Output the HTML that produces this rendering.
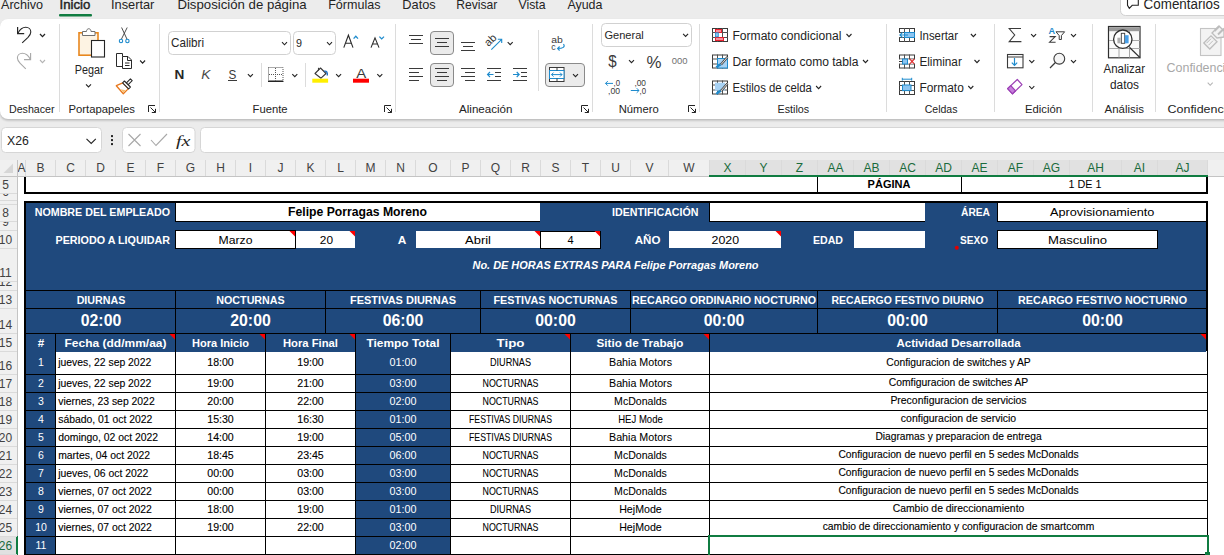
<!DOCTYPE html>
<html><head><meta charset="utf-8"><title>Excel</title>
<style>
html,body{margin:0;padding:0;width:1224px;height:555px;overflow:hidden;background:#ececec;}
svg{display:block;font-family:"Liberation Sans",sans-serif;}
</style></head><body>
<svg width="1224" height="555" viewBox="0 0 1224 555" shape-rendering="auto">
<rect x="0" y="0" width="1224" height="555" fill="#ececec" />
<text x="1" y="8.6" font-size="13.3" fill="#242424" textLength="42" lengthAdjust="spacingAndGlyphs" >Archivo</text>
<text x="59.6" y="8.6" font-size="13.3" fill="#242424" textLength="30.8" lengthAdjust="spacingAndGlyphs" stroke="#242424" stroke-width="0.45">Inicio</text>
<text x="111" y="8.6" font-size="13.3" fill="#242424" textLength="43.4" lengthAdjust="spacingAndGlyphs" >Insertar</text>
<text x="177.4" y="8.6" font-size="13.3" fill="#242424" textLength="129.2" lengthAdjust="spacingAndGlyphs" >Disposición de página</text>
<text x="328.2" y="8.6" font-size="13.3" fill="#242424" textLength="52.3" lengthAdjust="spacingAndGlyphs" >Fórmulas</text>
<text x="402.3" y="8.6" font-size="13.3" fill="#242424" textLength="33.4" lengthAdjust="spacingAndGlyphs" >Datos</text>
<text x="456.3" y="8.6" font-size="13.3" fill="#242424" textLength="41" lengthAdjust="spacingAndGlyphs" >Revisar</text>
<text x="518.5" y="8.6" font-size="13.3" fill="#242424" textLength="27" lengthAdjust="spacingAndGlyphs" >Vista</text>
<text x="567.4" y="8.6" font-size="13.3" fill="#242424" textLength="35" lengthAdjust="spacingAndGlyphs" >Ayuda</text>
<rect x="59" y="14" width="33" height="2.5" fill="#107C41" rx="1"/>
<rect x="1120.5" y="-6" width="120" height="21.5" rx="5" fill="#ffffff" stroke="#d1d1d1" stroke-width="1"/>
<path d="M1127.5,-1 V5.3 L1129.3,8.4 L1132.2,5.3 H1138.3 V-1" stroke="#242424" stroke-width="1.1" fill="none" />
<text x="1143.6" y="8.8" font-size="14" fill="#242424" textLength="76" lengthAdjust="spacingAndGlyphs" >Comentarios</text>
<defs><filter id="sh" x="-5%" y="-10%" width="110%" height="130%"><feGaussianBlur stdDeviation="1.3"/></filter></defs>
<rect x="0" y="20.5" width="1240" height="100" rx="8" fill="#000" opacity="0.22" filter="url(#sh)"/>
<rect x="0" y="19" width="1240" height="100" rx="8" fill="#ffffff"/>
<rect x="59" y="24" width="1" height="88" fill="#dcdcdc" />
<rect x="159" y="24" width="1" height="88" fill="#dcdcdc" />
<rect x="395" y="24" width="1" height="88" fill="#dcdcdc" />
<rect x="592" y="24" width="1" height="88" fill="#dcdcdc" />
<rect x="699" y="24" width="1" height="88" fill="#dcdcdc" />
<rect x="886" y="24" width="1" height="88" fill="#dcdcdc" />
<rect x="994" y="24" width="1" height="88" fill="#dcdcdc" />
<rect x="1092" y="24" width="1" height="88" fill="#dcdcdc" />
<rect x="1155" y="24" width="1" height="88" fill="#dcdcdc" />
<rect x="538" y="30" width="1" height="61" fill="#dcdcdc" />
<rect x="261" y="63" width="1" height="24" fill="#dcdcdc" />
<rect x="305" y="63" width="1" height="24" fill="#dcdcdc" />
<text x="9" y="113" font-size="11.3" fill="#242424" textLength="45.6" lengthAdjust="spacingAndGlyphs" >Deshacer</text>
<text x="68.5" y="113" font-size="11.3" fill="#242424" textLength="66.5" lengthAdjust="spacingAndGlyphs" >Portapapeles</text>
<text x="252.6" y="113" font-size="11.3" fill="#242424" textLength="35" lengthAdjust="spacingAndGlyphs" >Fuente</text>
<text x="459" y="113" font-size="11.3" fill="#242424" textLength="53.5" lengthAdjust="spacingAndGlyphs" >Alineación</text>
<text x="618.7" y="113" font-size="11.3" fill="#242424" textLength="40" lengthAdjust="spacingAndGlyphs" >Número</text>
<text x="777.5" y="113" font-size="11.3" fill="#242424" textLength="31.7" lengthAdjust="spacingAndGlyphs" >Estilos</text>
<text x="924.7" y="113" font-size="11.3" fill="#242424" textLength="32.8" lengthAdjust="spacingAndGlyphs" >Celdas</text>
<text x="1025" y="113" font-size="11.3" fill="#242424" textLength="37" lengthAdjust="spacingAndGlyphs" >Edición</text>
<text x="1104.6" y="113" font-size="11.3" fill="#242424" textLength="39.4" lengthAdjust="spacingAndGlyphs" >Análisis</text>
<text x="1167.6" y="113" font-size="11.3" fill="#242424" textLength="92" lengthAdjust="spacingAndGlyphs" >Confidencialidad</text>
<path d="M148.5,112 V105.5 H155" stroke="#242424" stroke-width="1" fill="none" />
<path d="M150.5,107.5 L155.5,112.5 M151.8,112.5 H155.5 V108.8" stroke="#242424" stroke-width="1" fill="none" />
<path d="M384.5,112 V105.5 H391" stroke="#242424" stroke-width="1" fill="none" />
<path d="M386.5,107.5 L391.5,112.5 M387.8,112.5 H391.5 V108.8" stroke="#242424" stroke-width="1" fill="none" />
<path d="M581.5,112 V105.5 H588" stroke="#242424" stroke-width="1" fill="none" />
<path d="M583.5,107.5 L588.5,112.5 M584.8,112.5 H588.5 V108.8" stroke="#242424" stroke-width="1" fill="none" />
<path d="M688.5,112 V105.5 H695" stroke="#242424" stroke-width="1" fill="none" />
<path d="M690.5,107.5 L695.5,112.5 M691.8,112.5 H695.5 V108.8" stroke="#242424" stroke-width="1" fill="none" />
<path d="M17.6,27 V33.6 H24.2" stroke="#262626" stroke-width="1.2" fill="none" />
<path d="M17.9,33.3 C19.8,29.5 22.6,27.3 25.8,27.3 C28.8,27.3 30.8,29.5 30.8,32 C30.8,34 29.8,35.5 28,37.3 L22.2,42.8" stroke="#262626" stroke-width="1.1" fill="none" />
<path d="M40.0,34.0 L42.5,36.599999999999994 L45.0,34.0" stroke="#242424" stroke-width="1.3" fill="none" />
<path d="M30.6,53 V59.6 H24" stroke="#a8a8a8" stroke-width="1.1" fill="none" />
<path d="M30.3,59.3 C28.4,55.5 25.6,53.3 22.4,53.3 C19.4,53.3 17.4,55.5 17.4,58 C17.4,60 18.4,61.5 20.2,63.3 L25.8,68.8" stroke="#a8a8a8" stroke-width="1.1" fill="none" />
<path d="M40.0,60.0 L42.5,62.599999999999994 L45.0,60.0" stroke="#b4b4b4" stroke-width="1.1" fill="none" />
<rect x="79" y="32.8" width="19" height="22.4" fill="#fdf3e3" stroke="#e8871e" stroke-width="1.6"/>
<path d="M82.5,35.5 V31.5 H86.5 C86.5,27.8 91,27.8 91,31.5 H95 V35.5 Z" fill="#fff" stroke="#707070" stroke-width="1"/>
<rect x="91.5" y="40.5" width="13" height="16.5" fill="#ffffff" stroke="#242424" stroke-width="1.1"/>
<text x="89.2" y="73.8" font-size="12.5" fill="#242424" text-anchor="middle" textLength="28.8" lengthAdjust="spacingAndGlyphs" >Pegar</text>
<path d="M86.0,84.3 L88.5,86.89999999999999 L91.0,84.3" stroke="#242424" stroke-width="1.1" fill="none" />
<path d="M121.6,27.5 L127,39.2 M127.2,27.5 L121.4,39.2" stroke="#3a3a3a" stroke-width="0.9" fill="none" />
<circle cx="121" cy="41" r="1.7" fill="none" stroke="#1e8bcd" stroke-width="1.1"/>
<circle cx="127.4" cy="41" r="1.7" fill="none" stroke="#1e8bcd" stroke-width="1.1"/>
<path d="M122.5,66.5 H116.5 V53.5 H122.5 V56.5" stroke="#2a2a2a" stroke-width="1" fill="none" />
<path d="M122.5,56.5 H128 L131.5,60 V68.5 H122.5 Z" fill="#fff" stroke="#2a2a2a" stroke-width="1"/>
<path d="M127.5,56.5 V60.5 H131.5" stroke="#2a2a2a" stroke-width="1" fill="none" />
<rect x="125" y="62.5" width="4.5" height="1" fill="#2a2a2a" />
<rect x="125" y="65" width="4.5" height="1" fill="#2a2a2a" />
<path d="M140.1,60.5 L142.6,63.099999999999994 L145.1,60.5" stroke="#242424" stroke-width="1.1" fill="none" />
<path d="M116.3,85.7 L122.8,82.8 L128.4,88.6 L123.3,93.7 Z" fill="#fff" stroke="#e8781e" stroke-width="1.3" stroke-linejoin="round"/>
<path d="M120.5,89.2 L126,90.2 L123.4,92.4 Z" fill="#f8c070"/>
<path d="M125.4,83.8 L130.4,78.8 L132.2,80.6 L127.2,85.6 Z" fill="#fff" stroke="#2a2a2a" stroke-width="1.1" stroke-linejoin="round"/>
<path d="M122.6,82.8 L124.4,81 L130.4,87 L128.6,88.8 Z" fill="#fff" stroke="#2a2a2a" stroke-width="1.1" stroke-linejoin="round"/>
<rect x="168.5" y="31.5" width="122" height="23" rx="4" fill="#fff" stroke="#d1d1d1" stroke-width="1"/>
<text x="171" y="47" font-size="12.2" fill="#262626" textLength="33" lengthAdjust="spacingAndGlyphs" >Calibri</text>
<path d="M282.0,42.2 L284.5,44.8 L287.0,42.2" stroke="#242424" stroke-width="1.1" fill="none" />
<rect x="293.5" y="31.5" width="42" height="23" rx="4" fill="#fff" stroke="#d1d1d1" stroke-width="1"/>
<text x="296" y="46.8" font-size="10.8" fill="#262626" >9</text>
<path d="M327.0,42.2 L329.5,44.8 L332.0,42.2" stroke="#242424" stroke-width="1.1" fill="none" />
<path d="M343.8,47.6 L348.4,35.2 L353,47.6 M345.4,43.2 H351.4" stroke="#2a2a2a" stroke-width="1.1" fill="none" />
<path d="M353.6,38.6 L355.8,36.3 L358,38.6" stroke="#1e8bcd" stroke-width="1.3" fill="none" />
<path d="M371,47.6 L375,37.9 L379,47.6 M372.4,44 H377.6" stroke="#2a2a2a" stroke-width="1.1" fill="none" />
<path d="M379.4,36.6 L381.7,38.9 L384,36.6" stroke="#1e8bcd" stroke-width="1.3" fill="none" />
<text x="174.5" y="79" font-size="13.5" fill="#262626" font-weight="bold" textLength="9.8" lengthAdjust="spacingAndGlyphs" >N</text>
<text x="201.2" y="79" font-size="13.5" fill="#4a4a4a" font-style="italic" textLength="9.2" lengthAdjust="spacingAndGlyphs" >K</text>
<text x="228.5" y="78.5" font-size="13" fill="#3a3a3a" textLength="7.8" lengthAdjust="spacingAndGlyphs" >S</text>
<rect x="228" y="80" width="9" height="1" fill="#3a3a3a" />
<path d="M247.9,74.10000000000001 L250.4,76.7 L252.9,74.10000000000001" stroke="#242424" stroke-width="1.1" fill="none" />
<rect x="268.5" y="67.5" width="14.5" height="13" fill="none" stroke="#555" stroke-width="1" stroke-dasharray="1,1"/>
<path d="M275.5,68 V80.5 M269,74.5 H283" stroke="#555" stroke-width="1" fill="none" stroke-dasharray="1,1"/>
<rect x="268" y="80.8" width="15.5" height="1.2" fill="#242424" />
<path d="M292.3,74.10000000000001 L294.8,76.7 L297.3,74.10000000000001" stroke="#242424" stroke-width="1.1" fill="none" />
<path d="M315,73.5 L320.5,68 L326,73.5 L321,78.2 Z" fill="#fff" stroke="#3a3a3a" stroke-width="1.1" stroke-linejoin="round"/>
<path d="M318.5,67.8 V70.5" stroke="#3a3a3a" stroke-width="1.1" fill="none" />
<path d="M324.2,71.2 C326.6,70.6 327.6,72.5 327.3,75.5" stroke="#1e6fc0" stroke-width="1.4" fill="none" />
<rect x="312.3" y="78.7" width="15.8" height="4" fill="#FFEF00" />
<path d="M336.1,74.10000000000001 L338.6,76.7 L341.1,74.10000000000001" stroke="#242424" stroke-width="1.1" fill="none" />
<text x="356.3" y="77.6" font-size="13.5" fill="#3a3a3a" textLength="10" lengthAdjust="spacingAndGlyphs" >A</text>
<rect x="353" y="78.7" width="16" height="4" fill="#FF0000" />
<path d="M377.3,74.10000000000001 L379.8,76.7 L382.3,74.10000000000001" stroke="#242424" stroke-width="1.1" fill="none" />
<rect x="409" y="35" width="14" height="1" fill="#3a3a3a" />
<rect x="411" y="39" width="10" height="1" fill="#3a3a3a" />
<rect x="409" y="43" width="14" height="1" fill="#3a3a3a" />
<rect x="430.5" y="31.5" width="23" height="23" rx="3.5" fill="#ebebeb" stroke="#8a8a8a" stroke-width="1"/>
<rect x="435" y="38" width="14" height="1" fill="#3a3a3a" />
<rect x="437" y="42" width="10" height="1" fill="#3a3a3a" />
<rect x="435" y="46" width="14" height="1" fill="#3a3a3a" />
<rect x="461" y="42" width="14" height="1" fill="#3a3a3a" />
<rect x="463" y="46" width="10" height="1" fill="#3a3a3a" />
<rect x="461" y="50" width="14" height="1" fill="#3a3a3a" />
<text x="484" y="44" font-size="11" fill="#333" transform="rotate(-45 490 40)">ab</text>
<path d="M491.3,49.7 L501.7,39.3 M497.8,39.3 H501.7 V43" stroke="#1e8bcd" stroke-width="1.1" fill="none" />
<path d="M507.7,42.1 L510.2,44.699999999999996 L512.7,42.1" stroke="#242424" stroke-width="1.1" fill="none" />
<rect x="409" y="68" width="14" height="1" fill="#3a3a3a" />
<rect x="409" y="72" width="10" height="1" fill="#3a3a3a" />
<rect x="409" y="76" width="14" height="1" fill="#3a3a3a" />
<rect x="409" y="80" width="10" height="1" fill="#3a3a3a" />
<rect x="430.5" y="63.5" width="23" height="23" rx="3.5" fill="#ebebeb" stroke="#8a8a8a" stroke-width="1"/>
<rect x="435" y="68" width="14" height="1" fill="#3a3a3a" />
<rect x="437" y="72" width="10" height="1" fill="#3a3a3a" />
<rect x="435" y="76" width="14" height="1" fill="#3a3a3a" />
<rect x="437" y="80" width="10" height="1" fill="#3a3a3a" />
<rect x="461" y="68" width="14" height="1" fill="#3a3a3a" />
<rect x="465" y="72" width="10" height="1" fill="#3a3a3a" />
<rect x="461" y="76" width="14" height="1" fill="#3a3a3a" />
<rect x="465" y="80" width="10" height="1" fill="#3a3a3a" />
<rect x="487" y="68" width="14" height="1" fill="#3a3a3a" />
<rect x="495" y="72" width="6" height="1" fill="#3a3a3a" />
<rect x="495" y="76" width="6" height="1" fill="#3a3a3a" />
<rect x="487" y="80" width="14" height="1" fill="#3a3a3a" />
<path d="M493.5,74.5 H487.5 M490,72 L487.5,74.5 L490,77" stroke="#1e8bcd" stroke-width="1.1" fill="none" />
<rect x="513" y="68" width="14" height="1" fill="#3a3a3a" />
<rect x="521" y="72" width="6" height="1" fill="#3a3a3a" />
<rect x="521" y="76" width="6" height="1" fill="#3a3a3a" />
<rect x="513" y="80" width="14" height="1" fill="#3a3a3a" />
<path d="M513,74.5 H519.2 M516.7,72 L519.2,74.5 L516.7,77" stroke="#1e8bcd" stroke-width="1.1" fill="none" />
<text x="551.2" y="42.6" font-size="8.8" fill="#3a3a3a" textLength="11.6" lengthAdjust="spacingAndGlyphs" >ab</text>
<text x="551.2" y="50" font-size="8.8" fill="#3a3a3a" >c</text>
<path d="M563.5,44 C565.5,47 563,48.5 557.6,48.5 M559.6,46.5 L557.6,48.5 L559.6,50.5" stroke="#1e8bcd" stroke-width="1.1" fill="none" />
<rect x="545.5" y="63.5" width="39" height="23" rx="3.5" fill="#ebebeb" stroke="#8a8a8a" stroke-width="1"/>
<rect x="549.5" y="67.5" width="14.5" height="14" fill="#fff" stroke="#3a3a3a" stroke-width="1"/>
<rect x="549.5" y="70.5" width="14.5" height="8" fill="#fff" stroke="#1e8bcd" stroke-width="1"/>
<rect x="556.5" y="67.5" width="1" height="3" fill="#3a3a3a" />
<rect x="556.5" y="78.5" width="1" height="3" fill="#3a3a3a" />
<path d="M551.5,74.6 H562 M553.5,72.6 L551.5,74.6 L553.5,76.6 M560,72.6 L562,74.6 L560,76.6" stroke="#1e8bcd" stroke-width="1" fill="none" />
<path d="M573.0,74.10000000000001 L575.5,76.7 L578.0,74.10000000000001" stroke="#242424" stroke-width="1.1" fill="none" />
<rect x="601.5" y="23.5" width="90" height="23" rx="4" fill="#fff" stroke="#d1d1d1" stroke-width="1"/>
<text x="604.5" y="38.5" font-size="11.8" fill="#262626" textLength="39.3" lengthAdjust="spacingAndGlyphs" >General</text>
<path d="M683.1,33.900000000000006 L685.6,36.5 L688.1,33.900000000000006" stroke="#242424" stroke-width="1.1" fill="none" />
<text x="608.2" y="66.5" font-size="16.5" fill="#3a3a3a" textLength="8.4" lengthAdjust="spacingAndGlyphs" >$</text>
<path d="M629.0,60.1 L631.5,62.699999999999996 L634.0,60.1" stroke="#242424" stroke-width="1.1" fill="none" />
<text x="646.4" y="68" font-size="16" fill="#3a3a3a" textLength="15" lengthAdjust="spacingAndGlyphs" >%</text>
<text x="671.8" y="64.2" font-size="9.2" fill="#707070" textLength="15.8" lengthAdjust="spacingAndGlyphs" >000</text>
<path d="M605.5,83.4 H613 M607.8,81.1 L605.5,83.4 L607.8,85.7" stroke="#1e8bcd" stroke-width="1" fill="none" />
<text x="613.5" y="85.8" font-size="8.6" fill="#3a3a3a" textLength="6.5" lengthAdjust="spacingAndGlyphs" >,0</text>
<text x="608" y="94" font-size="8.6" fill="#3a3a3a" textLength="12" lengthAdjust="spacingAndGlyphs" >,00</text>
<text x="634.4" y="85.8" font-size="8.6" fill="#3a3a3a" textLength="11.6" lengthAdjust="spacingAndGlyphs" >,00</text>
<path d="M630.8,90.5 H639 M636.7,88.2 L639,90.5 L636.7,92.8" stroke="#1e8bcd" stroke-width="1" fill="none" />
<text x="639.5" y="94" font-size="8.6" fill="#3a3a3a" textLength="6.5" lengthAdjust="spacingAndGlyphs" >,0</text>
<rect x="712.5" y="28.5" width="15" height="13" fill="none" stroke="#3a3a3a" stroke-width="1"/>
<path d="M717.5,28 V42 M722.5,28 V42 M712,32.5 H728 M712,37.5 H728" stroke="#505050" stroke-width="1" fill="none" />
<rect x="715.5" y="29.5" width="6" height="3" fill="#f4909c" stroke="#e8202e" stroke-width="1"/>
<rect x="715.5" y="37.5" width="8" height="3" fill="#f4909c" stroke="#e8202e" stroke-width="1"/>
<rect x="715.5" y="32.8" width="2.8" height="4" fill="#8cc4f0" stroke="#1e8bcd" stroke-width="0.8"/>
<text x="732.4" y="40" font-size="12.3" fill="#242424" textLength="109" lengthAdjust="spacingAndGlyphs" >Formato condicional</text>
<path d="M846.5,34.0 L849,36.599999999999994 L851.5,34.0" stroke="#242424" stroke-width="1.1" fill="none" />
<rect x="712.5" y="55.0" width="15" height="13" fill="none" stroke="#3a3a3a" stroke-width="1"/>
<path d="M717.5,54.5 V68.5 M722.5,54.5 V68.5 M712,59.0 H728 M712,64.0 H728" stroke="#505050" stroke-width="1" fill="none" />
<rect x="717.5" y="58.5" width="10" height="9.5" fill="#a8d2f4" stroke="#1e8bcd" stroke-width="1"/>
<path d="M716.5,67.5 C718,65.5 719.5,64.6 721,64.3" stroke="#1e8bcd" stroke-width="2.4" fill="none" />
<path d="M721,64.5 L727.5,57" stroke="#4a4a4a" stroke-width="2.4" fill="none" />
<path d="M721,64.5 L727.5,57" stroke="#fff" stroke-width="0.8" fill="none" />
<text x="732.4" y="66" font-size="12.3" fill="#242424" textLength="126" lengthAdjust="spacingAndGlyphs" >Dar formato como tabla</text>
<path d="M863.0,60.0 L865.5,62.599999999999994 L868.0,60.0" stroke="#242424" stroke-width="1.1" fill="none" />
<rect x="712.5" y="81.0" width="15" height="13" fill="none" stroke="#3a3a3a" stroke-width="1"/>
<path d="M717.5,80.5 V94.5 M722.5,80.5 V94.5 M712,85.0 H728 M712,90.0 H728" stroke="#505050" stroke-width="1" fill="none" />
<rect x="715" y="82.7" width="10" height="8" fill="#a8d2f4" />
<path d="M716.5,94 C718,92 719.5,91.1 721,90.8" stroke="#1e8bcd" stroke-width="2.4" fill="none" />
<path d="M721,91 L727.5,83.5" stroke="#4a4a4a" stroke-width="2.4" fill="none" />
<path d="M721,91 L727.5,83.5" stroke="#fff" stroke-width="0.8" fill="none" />
<text x="732.4" y="92" font-size="12.3" fill="#242424" textLength="79.5" lengthAdjust="spacingAndGlyphs" >Estilos de celda</text>
<path d="M816.1,86.0 L818.6,88.6 L821.1,86.0" stroke="#242424" stroke-width="1.1" fill="none" />
<rect x="899.5" y="28.5" width="15" height="13" fill="none" stroke="#3a3a3a" stroke-width="1"/>
<path d="M904.5,28 V42 M909.5,28 V42 M899,32.5 H915 M899,37.5 H915" stroke="#505050" stroke-width="1" fill="none" />
<rect x="898.5" y="33" width="5.6" height="4" fill="#fff" />
<rect x="904.5" y="32.5" width="10" height="5" fill="#8cc4f0" stroke="#1e8bcd" stroke-width="1"/>
<path d="M908,35 H900 M902.6,32.3 L899.9,35 L902.6,37.7" stroke="#1e8bcd" stroke-width="1.2" fill="none" />
<text x="919.4" y="40" font-size="12.3" fill="#242424" textLength="38.6" lengthAdjust="spacingAndGlyphs" >Insertar</text>
<path d="M970.9,34.0 L973.4,36.599999999999994 L975.9,34.0" stroke="#242424" stroke-width="1.1" fill="none" />
<rect x="899.5" y="55.0" width="15" height="13" fill="none" stroke="#3a3a3a" stroke-width="1"/>
<path d="M904.5,54.5 V68.5 M909.5,54.5 V68.5 M899,59.0 H915 M899,64.0 H915" stroke="#505050" stroke-width="1" fill="none" />
<rect x="898.5" y="59.5" width="17" height="4" fill="#fff" />
<rect x="902.5" y="59" width="5" height="5" fill="#8cc4f0" stroke="#1e8bcd" stroke-width="1"/>
<path d="M899,61.5 H902.3" stroke="#3a3a3a" stroke-width="1" fill="none" />
<path d="M909.8,59 L914.3,63.8 M914.3,59 L909.8,63.8" stroke="#e03030" stroke-width="1.1" fill="none" />
<text x="919.4" y="66" font-size="12.3" fill="#242424" textLength="42.4" lengthAdjust="spacingAndGlyphs" >Eliminar</text>
<path d="M974.5,60.0 L977,62.599999999999994 L979.5,60.0" stroke="#242424" stroke-width="1.1" fill="none" />
<rect x="899.5" y="81.5" width="15" height="13" fill="none" stroke="#3a3a3a" stroke-width="1"/>
<path d="M904.5,81 V95 M909.5,81 V95 M899,85.5 H915 M899,90.5 H915" stroke="#505050" stroke-width="1" fill="none" />
<rect x="902.5" y="85" width="8.5" height="5.6" fill="#8cc4f0" stroke="#1e8bcd" stroke-width="1"/>
<path d="M902.3,79.2 H911.7 M902.3,77.8 V80.6 M911.7,77.8 V80.6" stroke="#1e8bcd" stroke-width="1" fill="none" />
<text x="919.4" y="92" font-size="12.3" fill="#242424" textLength="44.4" lengthAdjust="spacingAndGlyphs" >Formato</text>
<path d="M968.3,86.0 L970.8,88.6 L973.3,86.0" stroke="#242424" stroke-width="1.1" fill="none" />
<path d="M1021,28.5 H1009.2 L1014.7,35 L1009.2,41.6 H1021.4" stroke="#3a3a3a" stroke-width="1.1" fill="none" stroke-linejoin="miter"/>
<path d="M1031.1,34.1 L1033.6,36.699999999999996 L1036.1,34.1" stroke="#242424" stroke-width="1.1" fill="none" />
<rect x="1007.5" y="54.5" width="15.5" height="13.3" fill="#fff" stroke="#3a3a3a" stroke-width="1.1"/>
<rect x="1008" y="56.5" width="15" height="1" fill="#3a3a3a" />
<path d="M1014.5,58 V65.3 M1011.8,62.6 L1014.5,65.3 L1017.2,62.6" stroke="#1e8bcd" stroke-width="1.2" fill="none" />
<path d="M1029.3,60.1 L1031.8,62.699999999999996 L1034.3,60.1" stroke="#242424" stroke-width="1.1" fill="none" />
<path d="M1007.6,88.6 L1017.3,79.5 L1022,84.6 L1012.5,93.8 Z" fill="#fff" stroke="#9b3fb5" stroke-width="1.2" stroke-linejoin="round"/>
<path d="M1007.6,88.6 L1010.8,85.6 L1015.6,90.8 L1012.5,93.8 Z" fill="#c77fdc" stroke="#9b3fb5" stroke-width="1.2" stroke-linejoin="round"/>
<path d="M1029.3,86.2 L1031.8,88.8 L1034.3,86.2" stroke="#242424" stroke-width="1.1" fill="none" />
<text x="1048.6" y="33.5" font-size="9" fill="#1e8bcd" font-weight="bold" textLength="6.6" lengthAdjust="spacingAndGlyphs" >A</text>
<path d="M1049.6,36.6 H1055.2 L1049.6,42.2 H1055.6" stroke="#3a3a3a" stroke-width="1.1" fill="none" />
<path d="M1056,31.8 H1064.6 L1061.4,35.6 V39.5 H1059.2 V35.6 Z" fill="none" stroke="#3a3a3a" stroke-width="1" stroke-linejoin="round"/>
<path d="M1071.0,34.1 L1073.5,36.699999999999996 L1076.0,34.1" stroke="#242424" stroke-width="1.1" fill="none" />
<circle cx="1059.3" cy="58.7" r="5.4" fill="#f5f5f5" stroke="#3a3a3a" stroke-width="1.1"/>
<path d="M1055.4,62.5 L1050,68" stroke="#3a3a3a" stroke-width="1.2" fill="none" />
<path d="M1071.0,60.1 L1073.5,62.699999999999996 L1076.0,60.1" stroke="#242424" stroke-width="1.1" fill="none" />
<rect x="1108.5" y="26.5" width="31.5" height="31.3" fill="#fafafa" stroke="#2e2e2e" stroke-width="1.2"/>
<rect x="1109" y="27.2" width="30.8" height="4" fill="#9a9a9a" />
<rect x="1109" y="40" width="31" height="1" fill="#a8a8a8" />
<rect x="1109" y="48" width="31" height="1" fill="#a8a8a8" />
<rect x="1118.5" y="31" width="1" height="26.5" fill="#a8a8a8" />
<rect x="1129" y="31" width="1" height="26.5" fill="#a8a8a8" />
<circle cx="1122.8" cy="39.2" r="9.2" fill="#fff" stroke="#2e2e2e" stroke-width="1.3"/>
<rect x="1117.4" y="37.7" width="3" height="5.6" fill="#b0b0b0" />
<rect x="1121.3" y="33.3" width="3.4" height="10" fill="#fff" stroke="#3a3a3a" stroke-width="0.9"/>
<rect x="1124.8" y="35.2" width="3.8" height="8.1" fill="#4aa0e8" />
<path d="M1129.6,47.5 L1140,57.6" stroke="#2e2e2e" stroke-width="1.3" fill="none" />
<text x="1124.3" y="72.5" font-size="12.3" fill="#242424" text-anchor="middle" textLength="41.5" lengthAdjust="spacingAndGlyphs" >Analizar</text>
<text x="1124.5" y="88.5" font-size="12.3" fill="#242424" text-anchor="middle" textLength="29" lengthAdjust="spacingAndGlyphs" >datos</text>
<rect x="1200.5" y="28.5" width="20.5" height="27" fill="#f3f3f3" stroke="#c4c4c4" stroke-width="1.1"/>
<path d="M1203.8,43 L1211,35.8 L1217,41.8 L1209.8,49 Z" fill="#f3f3f3" stroke="#bdbdbd" stroke-width="1.3"/>
<path d="M1206.5,43.2 L1211,38.7 M1208.5,45.2 L1213,40.7" stroke="#bdbdbd" stroke-width="1" fill="none" />
<path d="M1212,33 L1219,26 L1224,31 L1224,37 L1217,38 Z" fill="#f3f3f3" stroke="#bdbdbd" stroke-width="1.3"/>
<path d="M1214.5,31 L1219,26.5 M1218,34.5 L1224,28.5" stroke="#bdbdbd" stroke-width="2" fill="none" />
<text x="1166.6" y="72.2" font-size="12.3" fill="#a8a8a8" textLength="92" lengthAdjust="spacingAndGlyphs" >Confidencialidad</text>
<path d="M1207.7,82.7 L1210.2,85.3 L1212.7,82.7" stroke="#b4b4b4" stroke-width="1.1" fill="none" />
<rect x="1.5" y="127.5" width="100" height="25" rx="4" fill="#fff" stroke="#d6d6d6" stroke-width="1"/>
<text x="7" y="145" font-size="12.5" fill="#242424" textLength="21.8" lengthAdjust="spacingAndGlyphs" >X26</text>
<path d="M86.5,138.8 L91.2,143.5 L95.8,138.8" stroke="#242424" stroke-width="1.1" fill="none" />
<rect x="111" y="135.1" width="2" height="2" fill="#242424" />
<rect x="111" y="139.1" width="2" height="2" fill="#242424" />
<rect x="111" y="143.1" width="2" height="2" fill="#242424" />
<rect x="122.5" y="127.5" width="72.5" height="25" rx="4" fill="#fff" stroke="#d6d6d6" stroke-width="1"/>
<path d="M128.5,134 L140.5,146 M140.5,134 L128.5,146" stroke="#a8a8a8" stroke-width="1.1" fill="none" />
<path d="M151,140 L156,145.5 L167,134" stroke="#a8a8a8" stroke-width="1.1" fill="none" />
<text x="176" y="145.5" font-family="Liberation Serif" font-style="italic" font-size="15" fill="#242424" textLength="14.5" lengthAdjust="spacingAndGlyphs">fx</text>
<rect x="200.5" y="127.5" width="1100" height="25" rx="4" fill="#fff" stroke="#d6d6d6" stroke-width="1"/>
<rect x="18" y="177" width="1206" height="378" fill="#ffffff" />
<rect x="0" y="160" width="1224" height="16" fill="#f0f0f0" />
<rect x="709" y="160" width="499" height="16" fill="#e1e1e1" />
<rect x="25" y="160" width="1" height="16" fill="#dadada" />
<text x="21.5" y="172" font-size="12" fill="#424242" text-anchor="middle" >A</text>
<rect x="55" y="160" width="1" height="16" fill="#dadada" />
<text x="40.5" y="172" font-size="12" fill="#424242" text-anchor="middle" >B</text>
<rect x="85" y="160" width="1" height="16" fill="#dadada" />
<text x="70.5" y="172" font-size="12" fill="#424242" text-anchor="middle" >C</text>
<rect x="115" y="160" width="1" height="16" fill="#dadada" />
<text x="100.5" y="172" font-size="12" fill="#424242" text-anchor="middle" >D</text>
<rect x="145" y="160" width="1" height="16" fill="#dadada" />
<text x="130.5" y="172" font-size="12" fill="#424242" text-anchor="middle" >E</text>
<rect x="175" y="160" width="1" height="16" fill="#dadada" />
<text x="160.5" y="172" font-size="12" fill="#424242" text-anchor="middle" >F</text>
<rect x="205" y="160" width="1" height="16" fill="#dadada" />
<text x="190.5" y="172" font-size="12" fill="#424242" text-anchor="middle" >G</text>
<rect x="235" y="160" width="1" height="16" fill="#dadada" />
<text x="220.5" y="172" font-size="12" fill="#424242" text-anchor="middle" >H</text>
<rect x="265" y="160" width="1" height="16" fill="#dadada" />
<text x="250.5" y="172" font-size="12" fill="#424242" text-anchor="middle" >I</text>
<rect x="295" y="160" width="1" height="16" fill="#dadada" />
<text x="280.5" y="172" font-size="12" fill="#424242" text-anchor="middle" >J</text>
<rect x="325" y="160" width="1" height="16" fill="#dadada" />
<text x="310.5" y="172" font-size="12" fill="#424242" text-anchor="middle" >K</text>
<rect x="355" y="160" width="1" height="16" fill="#dadada" />
<text x="340.5" y="172" font-size="12" fill="#424242" text-anchor="middle" >L</text>
<rect x="385" y="160" width="1" height="16" fill="#dadada" />
<text x="370.5" y="172" font-size="12" fill="#424242" text-anchor="middle" >M</text>
<rect x="415" y="160" width="1" height="16" fill="#dadada" />
<text x="400.5" y="172" font-size="12" fill="#424242" text-anchor="middle" >N</text>
<rect x="450" y="160" width="1" height="16" fill="#dadada" />
<text x="433.0" y="172" font-size="12" fill="#424242" text-anchor="middle" >O</text>
<rect x="480" y="160" width="1" height="16" fill="#dadada" />
<text x="465.5" y="172" font-size="12" fill="#424242" text-anchor="middle" >P</text>
<rect x="510" y="160" width="1" height="16" fill="#dadada" />
<text x="495.5" y="172" font-size="12" fill="#424242" text-anchor="middle" >Q</text>
<rect x="540" y="160" width="1" height="16" fill="#dadada" />
<text x="525.5" y="172" font-size="12" fill="#424242" text-anchor="middle" >R</text>
<rect x="570" y="160" width="1" height="16" fill="#dadada" />
<text x="555.5" y="172" font-size="12" fill="#424242" text-anchor="middle" >S</text>
<rect x="600" y="160" width="1" height="16" fill="#dadada" />
<text x="585.5" y="172" font-size="12" fill="#424242" text-anchor="middle" >T</text>
<rect x="630" y="160" width="1" height="16" fill="#dadada" />
<text x="615.5" y="172" font-size="12" fill="#424242" text-anchor="middle" >U</text>
<rect x="668" y="160" width="1" height="16" fill="#dadada" />
<text x="649.5" y="172" font-size="12" fill="#424242" text-anchor="middle" >V</text>
<rect x="709" y="160" width="1" height="16" fill="#dadada" />
<text x="689.0" y="172" font-size="12" fill="#424242" text-anchor="middle" >W</text>
<rect x="745" y="160" width="1" height="16" fill="#dadada" />
<text x="727.5" y="172" font-size="12" fill="#1a6b3c" text-anchor="middle" >X</text>
<rect x="781" y="160" width="1" height="16" fill="#dadada" />
<text x="763.5" y="172" font-size="12" fill="#1a6b3c" text-anchor="middle" >Y</text>
<rect x="817" y="160" width="1" height="16" fill="#dadada" />
<text x="799.5" y="172" font-size="12" fill="#1a6b3c" text-anchor="middle" >Z</text>
<rect x="853" y="160" width="1" height="16" fill="#dadada" />
<text x="835.5" y="172" font-size="12" fill="#1a6b3c" text-anchor="middle" >AA</text>
<rect x="889" y="160" width="1" height="16" fill="#dadada" />
<text x="871.5" y="172" font-size="12" fill="#1a6b3c" text-anchor="middle" >AB</text>
<rect x="925" y="160" width="1" height="16" fill="#dadada" />
<text x="907.5" y="172" font-size="12" fill="#1a6b3c" text-anchor="middle" >AC</text>
<rect x="961" y="160" width="1" height="16" fill="#dadada" />
<text x="943.5" y="172" font-size="12" fill="#1a6b3c" text-anchor="middle" >AD</text>
<rect x="997" y="160" width="1" height="16" fill="#dadada" />
<text x="979.5" y="172" font-size="12" fill="#1a6b3c" text-anchor="middle" >AE</text>
<rect x="1033" y="160" width="1" height="16" fill="#dadada" />
<text x="1015.5" y="172" font-size="12" fill="#1a6b3c" text-anchor="middle" >AF</text>
<rect x="1069" y="160" width="1" height="16" fill="#dadada" />
<text x="1051.5" y="172" font-size="12" fill="#1a6b3c" text-anchor="middle" >AG</text>
<rect x="1121" y="160" width="1" height="16" fill="#dadada" />
<text x="1095.5" y="172" font-size="12" fill="#1a6b3c" text-anchor="middle" >AH</text>
<rect x="1157" y="160" width="1" height="16" fill="#dadada" />
<text x="1139.5" y="172" font-size="12" fill="#1a6b3c" text-anchor="middle" >AI</text>
<rect x="1207" y="160" width="1" height="16" fill="#dadada" />
<text x="1182.5" y="172" font-size="12" fill="#1a6b3c" text-anchor="middle" >AJ</text>
<rect x="1260" y="160" width="1" height="16" fill="#dadada" />
<text x="1234.0" y="172" font-size="12" fill="#424242" text-anchor="middle" >AK</text>
<rect x="0" y="176" width="1224" height="1" fill="#c4c4c4" />
<rect x="709" y="175" width="499" height="2" fill="#107C41" />
<path d="M13,163.5 V173 H3.5 Z" fill="#d6d6d6"/>
<rect x="0" y="177" width="17" height="378" fill="#f0f0f0" />
<rect x="0" y="536" width="17" height="19" fill="#e1e1e1" />
<rect x="17" y="160" width="1" height="395" fill="#c4c4c4" />
<rect x="16" y="536" width="2" height="19" fill="#107C41" />
<rect x="0" y="193" width="17" height="1" fill="#dadada" />
<svg x="0" y="177" width="17" height="16" overflow="hidden"><text x="5.5" y="12.4" text-anchor="middle" font-size="12" fill="#424242">5</text></svg>
<rect x="0" y="200" width="17" height="1" fill="#dadada" />
<svg x="0" y="194" width="17" height="6" overflow="hidden"><text x="5.5" y="2.4" text-anchor="middle" font-size="12" fill="#424242">6</text></svg>
<rect x="0" y="204" width="17" height="1" fill="#dadada" />
<svg x="0" y="201" width="17" height="3" overflow="hidden"><text x="5.5" y="-0.6000000000000001" text-anchor="middle" font-size="12" fill="#424242">7</text></svg>
<rect x="0" y="221" width="17" height="1" fill="#dadada" />
<svg x="0" y="205" width="17" height="16" overflow="hidden"><text x="5.5" y="12.4" text-anchor="middle" font-size="12" fill="#424242">8</text></svg>
<rect x="0" y="230" width="17" height="1" fill="#dadada" />
<svg x="0" y="222" width="17" height="8" overflow="hidden"><text x="5.5" y="4.4" text-anchor="middle" font-size="12" fill="#424242">9</text></svg>
<rect x="0" y="248" width="17" height="1" fill="#dadada" />
<svg x="0" y="231" width="17" height="17" overflow="hidden"><text x="5.5" y="13.4" text-anchor="middle" font-size="12" fill="#424242">10</text></svg>
<rect x="0" y="281" width="17" height="1" fill="#dadada" />
<svg x="0" y="249" width="17" height="32" overflow="hidden"><text x="5.5" y="28.4" text-anchor="middle" font-size="12" fill="#424242">11</text></svg>
<rect x="0" y="290" width="17" height="1" fill="#dadada" />
<svg x="0" y="282" width="17" height="8" overflow="hidden"><text x="5.5" y="4.4" text-anchor="middle" font-size="12" fill="#424242">12</text></svg>
<rect x="0" y="308" width="17" height="1" fill="#dadada" />
<svg x="0" y="291" width="17" height="17" overflow="hidden"><text x="5.5" y="13.4" text-anchor="middle" font-size="12" fill="#424242">13</text></svg>
<rect x="0" y="333" width="17" height="1" fill="#dadada" />
<svg x="0" y="309" width="17" height="24" overflow="hidden"><text x="5.5" y="20.4" text-anchor="middle" font-size="12" fill="#424242">14</text></svg>
<rect x="0" y="351" width="17" height="1" fill="#dadada" />
<svg x="0" y="334" width="17" height="17" overflow="hidden"><text x="5.5" y="13.4" text-anchor="middle" font-size="12" fill="#424242">15</text></svg>
<rect x="0" y="374" width="17" height="1" fill="#dadada" />
<svg x="0" y="352" width="17" height="22" overflow="hidden"><text x="5.5" y="18.4" text-anchor="middle" font-size="12" fill="#424242">16</text></svg>
<rect x="0" y="392" width="17" height="1" fill="#dadada" />
<svg x="0" y="375" width="17" height="17" overflow="hidden"><text x="5.5" y="13.4" text-anchor="middle" font-size="12" fill="#424242">17</text></svg>
<rect x="0" y="410" width="17" height="1" fill="#dadada" />
<svg x="0" y="393" width="17" height="17" overflow="hidden"><text x="5.5" y="13.4" text-anchor="middle" font-size="12" fill="#424242">18</text></svg>
<rect x="0" y="428" width="17" height="1" fill="#dadada" />
<svg x="0" y="411" width="17" height="17" overflow="hidden"><text x="5.5" y="13.4" text-anchor="middle" font-size="12" fill="#424242">19</text></svg>
<rect x="0" y="446" width="17" height="1" fill="#dadada" />
<svg x="0" y="429" width="17" height="17" overflow="hidden"><text x="5.5" y="13.4" text-anchor="middle" font-size="12" fill="#424242">20</text></svg>
<rect x="0" y="464" width="17" height="1" fill="#dadada" />
<svg x="0" y="447" width="17" height="17" overflow="hidden"><text x="5.5" y="13.4" text-anchor="middle" font-size="12" fill="#424242">21</text></svg>
<rect x="0" y="482" width="17" height="1" fill="#dadada" />
<svg x="0" y="465" width="17" height="17" overflow="hidden"><text x="5.5" y="13.4" text-anchor="middle" font-size="12" fill="#424242">22</text></svg>
<rect x="0" y="500" width="17" height="1" fill="#dadada" />
<svg x="0" y="483" width="17" height="17" overflow="hidden"><text x="5.5" y="13.4" text-anchor="middle" font-size="12" fill="#424242">23</text></svg>
<rect x="0" y="518" width="17" height="1" fill="#dadada" />
<svg x="0" y="501" width="17" height="17" overflow="hidden"><text x="5.5" y="13.4" text-anchor="middle" font-size="12" fill="#424242">24</text></svg>
<rect x="0" y="536" width="17" height="1" fill="#dadada" />
<svg x="0" y="519" width="17" height="17" overflow="hidden"><text x="5.5" y="13.4" text-anchor="middle" font-size="12" fill="#424242">25</text></svg>
<rect x="0" y="554" width="17" height="1" fill="#dadada" />
<svg x="0" y="537" width="17" height="17" overflow="hidden"><text x="5.5" y="13.4" text-anchor="middle" font-size="12" fill="#1a6b3c">26</text></svg>
<rect x="24" y="177" width="2" height="17" fill="#000" />
<rect x="1206" y="177" width="2" height="17" fill="#000" />
<rect x="24" y="192" width="1184" height="2" fill="#000" />
<rect x="817" y="177" width="1" height="15" fill="#000" />
<rect x="961" y="177" width="1" height="15" fill="#000" />
<text x="889" y="188" font-size="11" fill="#000" font-weight="bold" text-anchor="middle" textLength="42.8" lengthAdjust="spacingAndGlyphs" >PÁGINA</text>
<text x="1085" y="188" font-size="11" fill="#000" text-anchor="middle" textLength="33" lengthAdjust="spacingAndGlyphs" >1 DE 1</text>
<rect x="26" y="203" width="1180" height="352" fill="#1F497D" />
<rect x="24" y="201" width="1184" height="2" fill="#000" />
<rect x="24" y="201" width="2" height="354" fill="#000" />
<rect x="1206" y="201" width="2" height="150" fill="#000" />
<rect x="176" y="203" width="364" height="18" fill="#fff" />
<rect x="175" y="203" width="1" height="19" fill="#000" />
<rect x="175" y="221" width="365" height="1" fill="#000" />
<text x="357.5" y="215.8" font-size="12.2" fill="#000" font-weight="bold" text-anchor="middle" textLength="139" lengthAdjust="spacingAndGlyphs" >Felipe Porragas Moreno</text>
<text x="34.7" y="216" font-size="11" fill="#fff" font-weight="bold" textLength="135.3" lengthAdjust="spacingAndGlyphs" >NOMBRE DEL EMPLEADO</text>
<text x="612" y="216" font-size="11" fill="#fff" font-weight="bold" textLength="86.5" lengthAdjust="spacingAndGlyphs" >IDENTIFICACIÓN</text>
<rect x="709" y="203" width="216" height="18" fill="#fff" />
<rect x="709" y="203" width="1" height="19" fill="#000" />
<rect x="709" y="221" width="216" height="1" fill="#000" />
<text x="961" y="216" font-size="11" fill="#fff" font-weight="bold" textLength="29" lengthAdjust="spacingAndGlyphs" >ÁREA</text>
<rect x="997" y="203" width="209" height="18" fill="#fff" />
<rect x="997" y="203" width="1" height="19" fill="#000" />
<rect x="997" y="221" width="209" height="1" fill="#000" />
<text x="1102.2" y="216" font-size="11" fill="#000" text-anchor="middle" textLength="104.4" lengthAdjust="spacingAndGlyphs" >Aprovisionamiento</text>
<text x="55.5" y="244" font-size="11" fill="#fff" font-weight="bold" textLength="114.5" lengthAdjust="spacingAndGlyphs" >PERIODO A LIQUIDAR</text>
<rect x="175" y="230" width="120" height="19" fill="#fff" />
<rect x="175" y="230" width="120" height="1" fill="#000" />
<rect x="175" y="248" width="121" height="1" fill="#000" />
<rect x="175" y="230" width="1" height="19" fill="#000" />
<rect x="295" y="230" width="1" height="19" fill="#000" />
<path d="M289.5,231 H295 V236.5 Z" fill="#ff0000"/>
<text x="235.5" y="243.8" font-size="11" fill="#000" text-anchor="middle" textLength="33.9" lengthAdjust="spacingAndGlyphs" >Marzo</text>
<rect x="296" y="231" width="59" height="17" fill="#fff" />
<path d="M349.5,231 H355 V236.5 Z" fill="#ff0000"/>
<text x="326.4" y="243.8" font-size="11" fill="#000" text-anchor="middle" textLength="13.2" lengthAdjust="spacingAndGlyphs" >20</text>
<text x="402" y="244" font-size="11" fill="#fff" font-weight="bold" text-anchor="middle" textLength="8.6" lengthAdjust="spacingAndGlyphs" >A</text>
<rect x="416" y="231" width="124" height="17" fill="#fff" />
<rect x="540" y="231" width="1" height="18" fill="#000" />
<path d="M534.5,231 H540 V236.5 Z" fill="#ff0000"/>
<text x="478" y="243.8" font-size="11" fill="#000" text-anchor="middle" textLength="26" lengthAdjust="spacingAndGlyphs" >Abril</text>
<rect x="541" y="231" width="59" height="18" fill="#fff" />
<rect x="541" y="231" width="59" height="1" fill="#000" />
<rect x="541" y="248" width="60" height="1" fill="#000" />
<rect x="600" y="231" width="1" height="18" fill="#000" />
<path d="M594.5,231 H600 V236.5 Z" fill="#ff0000"/>
<text x="570.5" y="243.8" font-size="11" fill="#000" text-anchor="middle" >4</text>
<text x="647.6" y="244" font-size="11" fill="#fff" font-weight="bold" text-anchor="middle" textLength="25.7" lengthAdjust="spacingAndGlyphs" >AÑO</text>
<rect x="669" y="231" width="112" height="17" fill="#fff" />
<path d="M775.5,231 H781 V236.5 Z" fill="#ff0000"/>
<text x="725.3" y="243.8" font-size="11" fill="#000" text-anchor="middle" textLength="27.5" lengthAdjust="spacingAndGlyphs" >2020</text>
<text x="828" y="244" font-size="11" fill="#fff" font-weight="bold" text-anchor="middle" textLength="30" lengthAdjust="spacingAndGlyphs" >EDAD</text>
<rect x="854" y="231" width="71" height="17" fill="#fff" />
<text x="974" y="244" font-size="11" fill="#fff" font-weight="bold" text-anchor="middle" textLength="28" lengthAdjust="spacingAndGlyphs" >SEXO</text>
<circle cx="956.8" cy="247.8" r="2" fill="#e00000"/>
<rect x="997" y="230" width="160" height="19" fill="#fff" />
<rect x="997" y="230" width="160" height="1" fill="#000" />
<rect x="997" y="248" width="161" height="1" fill="#000" />
<rect x="997" y="230" width="1" height="19" fill="#000" />
<rect x="1157" y="230" width="1" height="19" fill="#000" />
<text x="1077.5" y="243.8" font-size="11" fill="#000" text-anchor="middle" textLength="59" lengthAdjust="spacingAndGlyphs" >Masculino</text>
<text x="615.5" y="269" font-size="11" fill="#fff" font-weight="bold" font-style="italic" text-anchor="middle" textLength="286" lengthAdjust="spacingAndGlyphs" >No. DE HORAS EXTRAS PARA Felipe Porragas Moreno</text>
<rect x="26" y="290" width="1180" height="1" fill="#000" />
<rect x="26" y="308" width="1180" height="1" fill="#000" />
<rect x="26" y="333" width="1180" height="1" fill="#000" />
<text x="101.0" y="304" font-size="11" fill="#fff" font-weight="bold" text-anchor="middle" textLength="48.7" lengthAdjust="spacingAndGlyphs" >DIURNAS</text>
<text x="101.0" y="326" font-size="16" fill="#fff" font-weight="bold" text-anchor="middle" textLength="40.5" lengthAdjust="spacingAndGlyphs" >02:00</text>
<rect x="175" y="290" width="1" height="43" fill="#000" />
<text x="250.5" y="304" font-size="11" fill="#fff" font-weight="bold" text-anchor="middle" textLength="68.4" lengthAdjust="spacingAndGlyphs" >NOCTURNAS</text>
<text x="250.5" y="326" font-size="16" fill="#fff" font-weight="bold" text-anchor="middle" textLength="40.5" lengthAdjust="spacingAndGlyphs" >20:00</text>
<rect x="325" y="290" width="1" height="43" fill="#000" />
<text x="403.0" y="304" font-size="11" fill="#fff" font-weight="bold" text-anchor="middle" textLength="106" lengthAdjust="spacingAndGlyphs" >FESTIVAS DIURNAS</text>
<text x="403.0" y="326" font-size="16" fill="#fff" font-weight="bold" text-anchor="middle" textLength="40.5" lengthAdjust="spacingAndGlyphs" >06:00</text>
<rect x="480" y="290" width="1" height="43" fill="#000" />
<text x="555.5" y="304" font-size="11" fill="#fff" font-weight="bold" text-anchor="middle" textLength="124" lengthAdjust="spacingAndGlyphs" >FESTIVAS NOCTURNAS</text>
<text x="555.5" y="326" font-size="16" fill="#fff" font-weight="bold" text-anchor="middle" textLength="40.5" lengthAdjust="spacingAndGlyphs" >00:00</text>
<rect x="630" y="290" width="1" height="43" fill="#000" />
<text x="724.0" y="304" font-size="11" fill="#fff" font-weight="bold" text-anchor="middle" textLength="184" lengthAdjust="spacingAndGlyphs" >RECARGO ORDINARIO NOCTURNO</text>
<text x="724.0" y="326" font-size="16" fill="#fff" font-weight="bold" text-anchor="middle" textLength="40.5" lengthAdjust="spacingAndGlyphs" >00:00</text>
<rect x="817" y="290" width="1" height="43" fill="#000" />
<text x="907.5" y="304" font-size="11" fill="#fff" font-weight="bold" text-anchor="middle" textLength="152" lengthAdjust="spacingAndGlyphs" >RECAERGO FESTIVO DIURNO</text>
<text x="907.5" y="326" font-size="16" fill="#fff" font-weight="bold" text-anchor="middle" textLength="40.5" lengthAdjust="spacingAndGlyphs" >00:00</text>
<rect x="997" y="290" width="1" height="43" fill="#000" />
<text x="1102.5" y="304" font-size="11" fill="#fff" font-weight="bold" text-anchor="middle" textLength="169" lengthAdjust="spacingAndGlyphs" >RECARGO FESTIVO NOCTURNO</text>
<text x="1102.5" y="326" font-size="16" fill="#fff" font-weight="bold" text-anchor="middle" textLength="40.5" lengthAdjust="spacingAndGlyphs" >00:00</text>
<text x="41.0" y="347" font-size="11.5" fill="#fff" font-weight="bold" text-anchor="middle" textLength="6.5" lengthAdjust="spacingAndGlyphs" >#</text>
<text x="115.5" y="347" font-size="11.5" fill="#fff" font-weight="bold" text-anchor="middle" textLength="102" lengthAdjust="spacingAndGlyphs" >Fecha (dd/mm/aa)</text>
<text x="220.5" y="347" font-size="11.5" fill="#fff" font-weight="bold" text-anchor="middle" textLength="57" lengthAdjust="spacingAndGlyphs" >Hora Inicio</text>
<text x="310.5" y="347" font-size="11.5" fill="#fff" font-weight="bold" text-anchor="middle" textLength="55" lengthAdjust="spacingAndGlyphs" >Hora Final</text>
<text x="403.0" y="347" font-size="11.5" fill="#fff" font-weight="bold" text-anchor="middle" textLength="73" lengthAdjust="spacingAndGlyphs" >Tiempo Total</text>
<text x="510.5" y="347" font-size="11.5" fill="#fff" font-weight="bold" text-anchor="middle" textLength="28" lengthAdjust="spacingAndGlyphs" >Tipo</text>
<text x="640.0" y="347" font-size="11.5" fill="#fff" font-weight="bold" text-anchor="middle" textLength="87" lengthAdjust="spacingAndGlyphs" >Sitio de Trabajo</text>
<text x="958.5" y="347" font-size="11.5" fill="#fff" font-weight="bold" text-anchor="middle" textLength="124" lengthAdjust="spacingAndGlyphs" >Actividad Desarrollada</text>
<path d="M169.5,334 H175 V339.5 Z" fill="#ff0000"/>
<path d="M259.5,334 H265 V339.5 Z" fill="#ff0000"/>
<path d="M349.5,334 H355 V339.5 Z" fill="#ff0000"/>
<path d="M564.5,334 H570 V339.5 Z" fill="#ff0000"/>
<path d="M703.5,334 H709 V339.5 Z" fill="#ff0000"/>
<path d="M1200.5,334 H1206 V339.5 Z" fill="#ff0000"/>
<rect x="55" y="352" width="300" height="202" fill="#fff" />
<rect x="450" y="352" width="757" height="202" fill="#fff" />
<rect x="1207" y="351" width="1" height="204" fill="#000" />
<rect x="26" y="374" width="1181" height="1" fill="#000" />
<rect x="26" y="392" width="1181" height="1" fill="#000" />
<rect x="26" y="410" width="1181" height="1" fill="#000" />
<rect x="26" y="428" width="1181" height="1" fill="#000" />
<rect x="26" y="446" width="1181" height="1" fill="#000" />
<rect x="26" y="464" width="1181" height="1" fill="#000" />
<rect x="26" y="482" width="1181" height="1" fill="#000" />
<rect x="26" y="500" width="1181" height="1" fill="#000" />
<rect x="26" y="518" width="1181" height="1" fill="#000" />
<rect x="26" y="536" width="1181" height="1" fill="#000" />
<rect x="26" y="554" width="1181" height="1" fill="#000" />
<rect x="55" y="333" width="1" height="222" fill="#000" />
<rect x="175" y="333" width="1" height="222" fill="#000" />
<rect x="265" y="333" width="1" height="222" fill="#000" />
<rect x="355" y="333" width="1" height="222" fill="#000" />
<rect x="450" y="333" width="1" height="222" fill="#000" />
<rect x="570" y="333" width="1" height="222" fill="#000" />
<rect x="709" y="333" width="1" height="222" fill="#000" />
<text x="41" y="366" font-size="10.5" fill="#fff" text-anchor="middle" >1</text>
<text x="58.2" y="366" font-size="10.4" fill="#000" stroke="#000" stroke-width="0.12">jueves, 22 sep 2022</text>
<text x="220.5" y="366" font-size="10.4" fill="#000" text-anchor="middle" textLength="26.5" lengthAdjust="spacingAndGlyphs" stroke="#000" stroke-width="0.12">18:00</text>
<text x="310.5" y="366" font-size="10.4" fill="#000" text-anchor="middle" textLength="26.5" lengthAdjust="spacingAndGlyphs" stroke="#000" stroke-width="0.12">19:00</text>
<text x="403" y="366" font-size="10.4" fill="#fff" text-anchor="middle" textLength="27" lengthAdjust="spacingAndGlyphs" >01:00</text>
<text x="510.5" y="366" font-size="10.5" fill="#000" text-anchor="middle" textLength="41.1" lengthAdjust="spacingAndGlyphs" stroke="#000" stroke-width="0.07">DIURNAS</text>
<text x="640.5" y="366.2" font-size="10.4" fill="#000" text-anchor="middle" textLength="63.0" lengthAdjust="spacingAndGlyphs" stroke="#000" stroke-width="0.07">Bahia Motors</text>
<text x="958.5" y="366" font-size="10" fill="#000" text-anchor="middle" textLength="144.4" lengthAdjust="spacingAndGlyphs" stroke="#000" stroke-width="0.12">Configuracion de switches y AP</text>
<text x="41" y="386.7" font-size="10.5" fill="#fff" text-anchor="middle" >2</text>
<text x="58.2" y="386.7" font-size="10.4" fill="#000" stroke="#000" stroke-width="0.12">jueves, 22 sep 2022</text>
<text x="220.5" y="386.7" font-size="10.4" fill="#000" text-anchor="middle" textLength="26.5" lengthAdjust="spacingAndGlyphs" stroke="#000" stroke-width="0.12">19:00</text>
<text x="310.5" y="386.7" font-size="10.4" fill="#000" text-anchor="middle" textLength="26.5" lengthAdjust="spacingAndGlyphs" stroke="#000" stroke-width="0.12">21:00</text>
<text x="403" y="386.7" font-size="10.4" fill="#fff" text-anchor="middle" textLength="27" lengthAdjust="spacingAndGlyphs" >03:00</text>
<text x="510.5" y="386.7" font-size="10.5" fill="#000" text-anchor="middle" textLength="56.0" lengthAdjust="spacingAndGlyphs" stroke="#000" stroke-width="0.07">NOCTURNAS</text>
<text x="640.5" y="386.9" font-size="10.4" fill="#000" text-anchor="middle" textLength="63.0" lengthAdjust="spacingAndGlyphs" stroke="#000" stroke-width="0.07">Bahia Motors</text>
<text x="958.5" y="385.9" font-size="10" fill="#000" text-anchor="middle" textLength="139.5" lengthAdjust="spacingAndGlyphs" stroke="#000" stroke-width="0.12">Comfiguracion de switches AP</text>
<text x="41" y="404.7" font-size="10.5" fill="#fff" text-anchor="middle" >3</text>
<text x="58.2" y="404.7" font-size="10.4" fill="#000" stroke="#000" stroke-width="0.12">viernes, 23 sep 2022</text>
<text x="220.5" y="404.7" font-size="10.4" fill="#000" text-anchor="middle" textLength="26.5" lengthAdjust="spacingAndGlyphs" stroke="#000" stroke-width="0.12">20:00</text>
<text x="310.5" y="404.7" font-size="10.4" fill="#000" text-anchor="middle" textLength="26.5" lengthAdjust="spacingAndGlyphs" stroke="#000" stroke-width="0.12">22:00</text>
<text x="403" y="404.7" font-size="10.4" fill="#fff" text-anchor="middle" textLength="27" lengthAdjust="spacingAndGlyphs" >02:00</text>
<text x="510.5" y="404.7" font-size="10.5" fill="#000" text-anchor="middle" textLength="56.0" lengthAdjust="spacingAndGlyphs" stroke="#000" stroke-width="0.07">NOCTURNAS</text>
<text x="640.5" y="404.9" font-size="10.4" fill="#000" text-anchor="middle" textLength="52.800000000000004" lengthAdjust="spacingAndGlyphs" stroke="#000" stroke-width="0.07">McDonalds</text>
<text x="958.5" y="403.9" font-size="10" fill="#000" text-anchor="middle" textLength="136.2" lengthAdjust="spacingAndGlyphs" stroke="#000" stroke-width="0.12">Preconfiguracion de servicios</text>
<text x="41" y="422.7" font-size="10.5" fill="#fff" text-anchor="middle" >4</text>
<text x="58.2" y="422.7" font-size="10.4" fill="#000" stroke="#000" stroke-width="0.12">sábado, 01 oct 2022</text>
<text x="220.5" y="422.7" font-size="10.4" fill="#000" text-anchor="middle" textLength="26.5" lengthAdjust="spacingAndGlyphs" stroke="#000" stroke-width="0.12">15:30</text>
<text x="310.5" y="422.7" font-size="10.4" fill="#000" text-anchor="middle" textLength="26.5" lengthAdjust="spacingAndGlyphs" stroke="#000" stroke-width="0.12">16:30</text>
<text x="403" y="422.7" font-size="10.4" fill="#fff" text-anchor="middle" textLength="27" lengthAdjust="spacingAndGlyphs" >01:00</text>
<text x="510.5" y="422.7" font-size="10.5" fill="#000" text-anchor="middle" textLength="82.89999999999999" lengthAdjust="spacingAndGlyphs" stroke="#000" stroke-width="0.07">FESTIVAS DIURNAS</text>
<text x="640.5" y="422.9" font-size="10.4" fill="#000" text-anchor="middle" textLength="44.6" lengthAdjust="spacingAndGlyphs" stroke="#000" stroke-width="0.07">HEJ Mode</text>
<text x="958.5" y="421.9" font-size="10" fill="#000" text-anchor="middle" textLength="115.3" lengthAdjust="spacingAndGlyphs" stroke="#000" stroke-width="0.12">configuracion de servicio</text>
<text x="41" y="440.7" font-size="10.5" fill="#fff" text-anchor="middle" >5</text>
<text x="58.2" y="440.7" font-size="10.4" fill="#000" stroke="#000" stroke-width="0.12">domingo, 02 oct 2022</text>
<text x="220.5" y="440.7" font-size="10.4" fill="#000" text-anchor="middle" textLength="26.5" lengthAdjust="spacingAndGlyphs" stroke="#000" stroke-width="0.12">14:00</text>
<text x="310.5" y="440.7" font-size="10.4" fill="#000" text-anchor="middle" textLength="26.5" lengthAdjust="spacingAndGlyphs" stroke="#000" stroke-width="0.12">19:00</text>
<text x="403" y="440.7" font-size="10.4" fill="#fff" text-anchor="middle" textLength="27" lengthAdjust="spacingAndGlyphs" >05:00</text>
<text x="510.5" y="440.7" font-size="10.5" fill="#000" text-anchor="middle" textLength="82.89999999999999" lengthAdjust="spacingAndGlyphs" stroke="#000" stroke-width="0.07">FESTIVAS DIURNAS</text>
<text x="640.5" y="440.9" font-size="10.4" fill="#000" text-anchor="middle" textLength="63.0" lengthAdjust="spacingAndGlyphs" stroke="#000" stroke-width="0.07">Bahia Motors</text>
<text x="958.5" y="439.9" font-size="10" fill="#000" text-anchor="middle" textLength="166.2" lengthAdjust="spacingAndGlyphs" stroke="#000" stroke-width="0.12">Diagramas y preparacion de entrega</text>
<text x="41" y="458.7" font-size="10.5" fill="#fff" text-anchor="middle" >6</text>
<text x="58.2" y="458.7" font-size="10.4" fill="#000" stroke="#000" stroke-width="0.12">martes, 04 oct 2022</text>
<text x="220.5" y="458.7" font-size="10.4" fill="#000" text-anchor="middle" textLength="26.5" lengthAdjust="spacingAndGlyphs" stroke="#000" stroke-width="0.12">18:45</text>
<text x="310.5" y="458.7" font-size="10.4" fill="#000" text-anchor="middle" textLength="26.5" lengthAdjust="spacingAndGlyphs" stroke="#000" stroke-width="0.12">23:45</text>
<text x="403" y="458.7" font-size="10.4" fill="#fff" text-anchor="middle" textLength="27" lengthAdjust="spacingAndGlyphs" >06:00</text>
<text x="510.5" y="458.7" font-size="10.5" fill="#000" text-anchor="middle" textLength="56.0" lengthAdjust="spacingAndGlyphs" stroke="#000" stroke-width="0.07">NOCTURNAS</text>
<text x="640.5" y="458.9" font-size="10.4" fill="#000" text-anchor="middle" textLength="52.800000000000004" lengthAdjust="spacingAndGlyphs" stroke="#000" stroke-width="0.07">McDonalds</text>
<text x="958.5" y="457.9" font-size="10" fill="#000" text-anchor="middle" textLength="240.2" lengthAdjust="spacingAndGlyphs" stroke="#000" stroke-width="0.12">Configuracion de nuevo perfil en 5 sedes McDonalds</text>
<text x="41" y="476.7" font-size="10.5" fill="#fff" text-anchor="middle" >7</text>
<text x="58.2" y="476.7" font-size="10.4" fill="#000" stroke="#000" stroke-width="0.12">jueves, 06 oct 2022</text>
<text x="220.5" y="476.7" font-size="10.4" fill="#000" text-anchor="middle" textLength="26.5" lengthAdjust="spacingAndGlyphs" stroke="#000" stroke-width="0.12">00:00</text>
<text x="310.5" y="476.7" font-size="10.4" fill="#000" text-anchor="middle" textLength="26.5" lengthAdjust="spacingAndGlyphs" stroke="#000" stroke-width="0.12">03:00</text>
<text x="403" y="476.7" font-size="10.4" fill="#fff" text-anchor="middle" textLength="27" lengthAdjust="spacingAndGlyphs" >03:00</text>
<text x="510.5" y="476.7" font-size="10.5" fill="#000" text-anchor="middle" textLength="56.0" lengthAdjust="spacingAndGlyphs" stroke="#000" stroke-width="0.07">NOCTURNAS</text>
<text x="640.5" y="476.9" font-size="10.4" fill="#000" text-anchor="middle" textLength="52.800000000000004" lengthAdjust="spacingAndGlyphs" stroke="#000" stroke-width="0.07">McDonalds</text>
<text x="958.5" y="475.9" font-size="10" fill="#000" text-anchor="middle" textLength="240.2" lengthAdjust="spacingAndGlyphs" stroke="#000" stroke-width="0.12">Configuracion de nuevo perfil en 5 sedes McDonalds</text>
<text x="41" y="494.7" font-size="10.5" fill="#fff" text-anchor="middle" >8</text>
<text x="58.2" y="494.7" font-size="10.4" fill="#000" stroke="#000" stroke-width="0.12">viernes, 07 oct 2022</text>
<text x="220.5" y="494.7" font-size="10.4" fill="#000" text-anchor="middle" textLength="26.5" lengthAdjust="spacingAndGlyphs" stroke="#000" stroke-width="0.12">00:00</text>
<text x="310.5" y="494.7" font-size="10.4" fill="#000" text-anchor="middle" textLength="26.5" lengthAdjust="spacingAndGlyphs" stroke="#000" stroke-width="0.12">03:00</text>
<text x="403" y="494.7" font-size="10.4" fill="#fff" text-anchor="middle" textLength="27" lengthAdjust="spacingAndGlyphs" >03:00</text>
<text x="510.5" y="494.7" font-size="10.5" fill="#000" text-anchor="middle" textLength="56.0" lengthAdjust="spacingAndGlyphs" stroke="#000" stroke-width="0.07">NOCTURNAS</text>
<text x="640.5" y="494.9" font-size="10.4" fill="#000" text-anchor="middle" textLength="52.800000000000004" lengthAdjust="spacingAndGlyphs" stroke="#000" stroke-width="0.07">McDonalds</text>
<text x="958.5" y="493.9" font-size="10" fill="#000" text-anchor="middle" textLength="240.2" lengthAdjust="spacingAndGlyphs" stroke="#000" stroke-width="0.12">Configuracion de nuevo perfil en 5 sedes McDonalds</text>
<text x="41" y="512.7" font-size="10.5" fill="#fff" text-anchor="middle" >9</text>
<text x="58.2" y="512.7" font-size="10.4" fill="#000" stroke="#000" stroke-width="0.12">viernes, 07 oct 2022</text>
<text x="220.5" y="512.7" font-size="10.4" fill="#000" text-anchor="middle" textLength="26.5" lengthAdjust="spacingAndGlyphs" stroke="#000" stroke-width="0.12">18:00</text>
<text x="310.5" y="512.7" font-size="10.4" fill="#000" text-anchor="middle" textLength="26.5" lengthAdjust="spacingAndGlyphs" stroke="#000" stroke-width="0.12">19:00</text>
<text x="403" y="512.7" font-size="10.4" fill="#fff" text-anchor="middle" textLength="27" lengthAdjust="spacingAndGlyphs" >01:00</text>
<text x="510.5" y="512.7" font-size="10.5" fill="#000" text-anchor="middle" textLength="41.1" lengthAdjust="spacingAndGlyphs" stroke="#000" stroke-width="0.07">DIURNAS</text>
<text x="640.5" y="512.9000000000001" font-size="10.4" fill="#000" text-anchor="middle" textLength="42.6" lengthAdjust="spacingAndGlyphs" stroke="#000" stroke-width="0.07">HejMode</text>
<text x="958.5" y="511.90000000000003" font-size="10" fill="#000" text-anchor="middle" textLength="131.6" lengthAdjust="spacingAndGlyphs" stroke="#000" stroke-width="0.12">Cambio de direccionamiento</text>
<text x="41" y="530.7" font-size="10.5" fill="#fff" text-anchor="middle" >10</text>
<text x="58.2" y="530.7" font-size="10.4" fill="#000" stroke="#000" stroke-width="0.12">viernes, 07 oct 2022</text>
<text x="220.5" y="530.7" font-size="10.4" fill="#000" text-anchor="middle" textLength="26.5" lengthAdjust="spacingAndGlyphs" stroke="#000" stroke-width="0.12">19:00</text>
<text x="310.5" y="530.7" font-size="10.4" fill="#000" text-anchor="middle" textLength="26.5" lengthAdjust="spacingAndGlyphs" stroke="#000" stroke-width="0.12">22:00</text>
<text x="403" y="530.7" font-size="10.4" fill="#fff" text-anchor="middle" textLength="27" lengthAdjust="spacingAndGlyphs" >03:00</text>
<text x="510.5" y="530.7" font-size="10.5" fill="#000" text-anchor="middle" textLength="56.0" lengthAdjust="spacingAndGlyphs" stroke="#000" stroke-width="0.07">NOCTURNAS</text>
<text x="640.5" y="530.9000000000001" font-size="10.4" fill="#000" text-anchor="middle" textLength="42.6" lengthAdjust="spacingAndGlyphs" stroke="#000" stroke-width="0.07">HejMode</text>
<text x="958.5" y="529.9000000000001" font-size="10" fill="#000" text-anchor="middle" textLength="271.6" lengthAdjust="spacingAndGlyphs" stroke="#000" stroke-width="0.12">cambio de direccionamiento y configuracion de smartcomm</text>
<text x="41" y="548.7" font-size="10.5" fill="#fff" text-anchor="middle" >11</text>
<text x="403" y="548.7" font-size="10.4" fill="#fff" text-anchor="middle" textLength="27" lengthAdjust="spacingAndGlyphs" >02:00</text>
<rect x="708" y="535" width="501" height="2" fill="#107C41" />
<rect x="708" y="535" width="2" height="20" fill="#107C41" />
<rect x="1207" y="535" width="2" height="18" fill="#107C41" />
<rect x="1205" y="552" width="5" height="5" fill="#107C41" />
</svg>
</body></html>
